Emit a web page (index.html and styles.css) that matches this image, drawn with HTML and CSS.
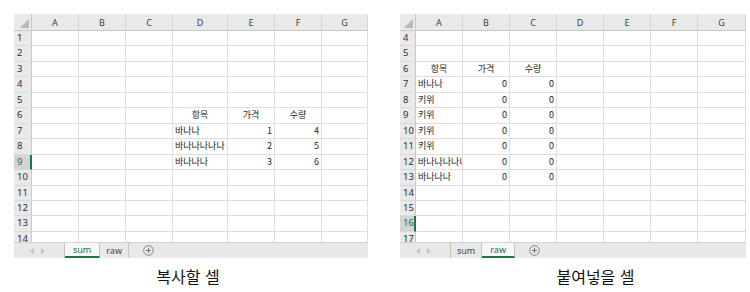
FILE: index.html
```html
<!DOCTYPE html>
<html lang="ko">
<head>
<meta charset="utf-8">
<link rel="stylesheet" href="styles.css">
</head>
<body>
<div class="page">
  <section class="panel panel-left">
    <div class="sheet">
      <div class="colhead">
        <span class="corner"><svg width="9" height="9" viewBox="0 0 9 9"><polygon points="9,0 9,9 0,9" fill="#b9b9b9"/></svg></span>
        <span>A</span><span>B</span><span>C</span><span>D</span><span>E</span><span>F</span><span>G</span>
      </div>
      <div class="rows">
        <div class="row"><span class="rh">1</span><span></span><span></span><span></span><span></span><span></span><span></span><span></span></div>
        <div class="row"><span class="rh">2</span><span></span><span></span><span></span><span></span><span></span><span></span><span></span></div>
        <div class="row"><span class="rh">3</span><span></span><span></span><span></span><span></span><span></span><span></span><span></span></div>
        <div class="row"><span class="rh">4</span><span></span><span></span><span></span><span></span><span></span><span></span><span></span></div>
        <div class="row"><span class="rh">5</span><span></span><span></span><span></span><span></span><span></span><span></span><span></span></div>
        <div class="row"><span class="rh">6</span><span></span><span></span><span></span><span class="ctr">항목</span><span class="ctr">가격</span><span class="ctr">수량</span><span></span></div>
        <div class="row"><span class="rh">7</span><span></span><span></span><span></span><span>바나나</span><span class="num">1</span><span class="num">4</span><span></span></div>
        <div class="row"><span class="rh">8</span><span></span><span></span><span></span><span>바나나나나나</span><span class="num">2</span><span class="num">5</span><span></span></div>
        <div class="row"><span class="rh sel">9</span><span></span><span></span><span></span><span>바나나나</span><span class="num">3</span><span class="num">6</span><span></span></div>
        <div class="row"><span class="rh">10</span><span></span><span></span><span></span><span></span><span></span><span></span><span></span></div>
        <div class="row"><span class="rh">11</span><span></span><span></span><span></span><span></span><span></span><span></span><span></span></div>
        <div class="row"><span class="rh">12</span><span></span><span></span><span></span><span></span><span></span><span></span><span></span></div>
        <div class="row"><span class="rh">13</span><span></span><span></span><span></span><span></span><span></span><span></span><span></span></div>
        <div class="row"><span class="rh">14</span><span></span><span></span><span></span><span></span><span></span><span></span><span></span></div>
      </div>
      <div class="tabbar">
        <div class="nav">
          <svg width="4" height="6" viewBox="0 0 4 6"><polygon points="4,0 4,6 0,3" fill="#c4c4c4"/></svg>
          <svg width="4" height="6" viewBox="0 0 4 6"><polygon points="0,0 0,6 4,3" fill="#c4c4c4"/></svg>
        </div>
        <div class="tab active">sum</div>
        <div class="tab">raw</div>
        <div class="add"><svg width="11" height="11" viewBox="0 0 11 11"><circle cx="5.5" cy="5.5" r="4.8" fill="none" stroke="#7a7a7a" stroke-width="0.9"/><path d="M5.5 3v5M3 5.5h5" stroke="#6a6a6a" stroke-width="0.9"/></svg></div>
      </div>
    </div>
    <p class="caption caption-left">복사할 셀</p>
  </section>

  <section class="panel panel-right">
    <div class="sheet">
      <div class="colhead">
        <span class="corner"><svg width="9" height="9" viewBox="0 0 9 9"><polygon points="9,0 9,9 0,9" fill="#b9b9b9"/></svg></span>
        <span>A</span><span>B</span><span>C</span><span>D</span><span>E</span><span>F</span><span>G</span>
      </div>
      <div class="rows">
        <div class="row"><span class="rh">4</span><span></span><span></span><span></span><span></span><span></span><span></span><span></span></div>
        <div class="row"><span class="rh">5</span><span></span><span></span><span></span><span></span><span></span><span></span><span></span></div>
        <div class="row"><span class="rh">6</span><span class="ctr">항목</span><span class="ctr">가격</span><span class="ctr">수량</span><span></span><span></span><span></span><span></span></div>
        <div class="row"><span class="rh">7</span><span>바나나</span><span class="num">0</span><span class="num">0</span><span></span><span></span><span></span><span></span></div>
        <div class="row"><span class="rh">8</span><span>키위</span><span class="num">0</span><span class="num">0</span><span></span><span></span><span></span><span></span></div>
        <div class="row"><span class="rh">9</span><span>키위</span><span class="num">0</span><span class="num">0</span><span></span><span></span><span></span><span></span></div>
        <div class="row"><span class="rh">10</span><span>키위</span><span class="num">0</span><span class="num">0</span><span></span><span></span><span></span><span></span></div>
        <div class="row"><span class="rh">11</span><span>키위</span><span class="num">0</span><span class="num">0</span><span></span><span></span><span></span><span></span></div>
        <div class="row"><span class="rh">12</span><span>바나나나나나</span><span class="num">0</span><span class="num">0</span><span></span><span></span><span></span><span></span></div>
        <div class="row"><span class="rh">13</span><span>바나나나</span><span class="num">0</span><span class="num">0</span><span></span><span></span><span></span><span></span></div>
        <div class="row"><span class="rh">14</span><span></span><span></span><span></span><span></span><span></span><span></span><span></span></div>
        <div class="row"><span class="rh">15</span><span></span><span></span><span></span><span></span><span></span><span></span><span></span></div>
        <div class="row"><span class="rh sel">16</span><span></span><span></span><span></span><span></span><span></span><span></span><span></span></div>
        <div class="row"><span class="rh">17</span><span></span><span></span><span></span><span></span><span></span><span></span><span></span></div>
      </div>
      <div class="tabbar">
        <div class="nav">
          <svg width="4" height="6" viewBox="0 0 4 6"><polygon points="4,0 4,6 0,3" fill="#c4c4c4"/></svg>
          <svg width="4" height="6" viewBox="0 0 4 6"><polygon points="0,0 0,6 4,3" fill="#c4c4c4"/></svg>
        </div>
        <div class="tab">sum</div>
        <div class="tab active">raw</div>
        <div class="add"><svg width="11" height="11" viewBox="0 0 11 11"><circle cx="5.5" cy="5.5" r="4.8" fill="none" stroke="#7a7a7a" stroke-width="0.9"/><path d="M5.5 3v5M3 5.5h5" stroke="#6a6a6a" stroke-width="0.9"/></svg></div>
      </div>
    </div>
    <p class="caption caption-right"><span class="spell">붙여넣을</span> 셀</p>
  </section>
</div>
</body>
</html>
```

FILE: styles.css
```css
* { box-sizing: border-box; }

body {
  margin: 0;
  background: #ffffff;
  font-family: "Noto Sans CJK KR", "Noto Sans", sans-serif;
  color: #222;
}

.page {
  display: flex;
  gap: 32px;
  padding: 14px 0 0 14px;
}

.panel-left { width: 354px; --cols: 18px 47px 47px 47px 55px 47px 47px 46px; }
.panel-right { width: 346px; --cols: 16px 47px 47px 47px 47px 47px 47px 48px; }

.sheet {
  display: flex;
  flex-direction: column;
}

.colhead {
  display: grid;
  grid-template-columns: var(--cols);
  height: 17px;
  background: #e9e9e9;
  border-bottom: 1px solid #c9c9c9;
}

.colhead > span {
  display: flex;
  align-items: center;
  justify-content: center;
  font-family: "Noto Sans", sans-serif;
  font-size: 9px;
  color: #3c3c3c;
  border-right: 1px solid #d6d6d6;
}

.colhead > .corner {
  align-items: flex-end;
  justify-content: flex-end;
  padding: 0 2px 2px 0;
  border-right-color: #c9c9c9;
}

.colhead > .corner svg { display: block; }

.rows {
  height: 211px;
  overflow: hidden;
}

.row {
  display: grid;
  grid-template-columns: var(--cols);
  height: 15.46px;
}

.row > span {
  border-right: 1px solid #dedede;
  border-bottom: 1px solid #dedede;
  font-size: 9px;
  line-height: 14px;
  padding: 0 2px;
  overflow: hidden;
  white-space: nowrap;
  color: #1e1e1e;
}

.row > .rh {
  background: #e9e9e9;
  border-right-color: #c9c9c9;
  border-bottom-color: #dadada;
  color: #2e2e2e;
  padding-left: 3px;
  font-family: "Noto Sans", sans-serif;
  font-size: 9.5px;
}

.row > .rh.sel {
  background: #d4d4d4;
  color: #217346;
  border-right: 2px solid #217346;
}

.row > .num { text-align: right; }
.row > .ctr { text-align: center; }

.tabbar {
  display: flex;
  align-items: stretch;
  height: 16px;
  background: #e8e8e8;
  border-top: 1px solid #d2d2d2;
}

.nav {
  display: flex;
  align-items: center;
  gap: 7px;
  width: 51px;
  padding-left: 16px;
  border-right: 1px solid #c4c4c4;
}

.nav svg { display: block; }

.tab {
  display: flex;
  align-items: center;
  padding: 0 6px;
  font-family: "Noto Sans", sans-serif;
  font-size: 9px;
  color: #444;
  border-right: 1px solid #c4c4c4;
}

.tab.active {
  padding: 0 8px;
  background: #f7f7f7;
  color: #217346;
  border-bottom: 2px solid #217346;
}

.add {
  display: flex;
  align-items: center;
  padding-left: 14px;
}

.add svg { display: block; }

.caption {
  margin: 8px 0 0;
  font-size: 16px;
  line-height: 20px;
  text-align: center;
  color: #111;
}

.caption-left { padding-right: 6px; }
.caption-right { padding-left: 45px; }

.spell {
  text-decoration: underline wavy #e0302a;
  text-decoration-thickness: 1px;
  text-underline-offset: 3px;
}
```
